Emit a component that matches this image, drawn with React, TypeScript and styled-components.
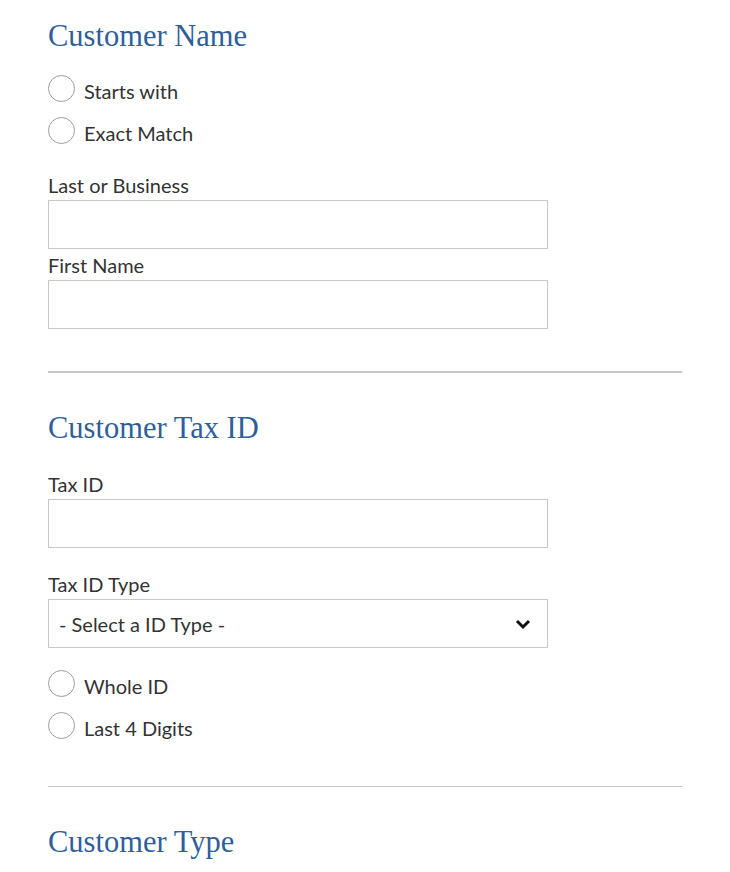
import React from "react";
import styled, { createGlobalStyle } from "styled-components";

const GlobalStyle = createGlobalStyle`
	body {
		margin: 0;
		background: #fff;
		font-family: Lato, "Open Sans", sans-serif;
		color: #333;
	}
`;

const Page = styled.div`
	width: 634px;
	padding: 19px 0 0 48px;
`;

const Heading = styled.h2`
	margin: 0;
	font-family: "Liberation Serif", "DejaVu Serif", serif;
	font-weight: 400;
	font-size: 30.5px;
	line-height: 34px;
	color: #2e5f9c;
`;

const RadioGroup = styled.div<{ $top: number }>`
	display: flex;
	flex-direction: column;
	gap: 14px;
	margin-top: ${(p) => p.$top}px;
`;

const RadioRow = styled.label`
	display: flex;
	align-items: center;
	gap: 9px;
	height: 28px;
	font-size: 20px;
	color: #333;
	cursor: pointer;
`;

const RadioText = styled.span`
	padding-top: 6px;
`;

const Circle = styled.span`
	width: 25px;
	height: 25px;
	border: 1.5px solid #9c9c9c;
	border-radius: 50%;
	flex-shrink: 0;
`;

const Field = styled.div<{ $top: number }>`
	display: flex;
	flex-direction: column;
	gap: 3px;
	margin-top: ${(p) => p.$top}px;
	width: 500px;
`;

const Label = styled.div`
	font-size: 20px;
	line-height: 24px;
	color: #333;
`;

const TextBox = styled.div`
	height: 47px;
	border: 1px solid #c8c8c8;
	background: #fff;
`;

const SelectBox = styled.div`
	height: 47px;
	border: 1px solid #c8c8c8;
	display: flex;
	align-items: center;
	justify-content: space-between;
	padding: 0 16px 0 10px;
	font-size: 20px;
	color: #333;
`;

const Divider = styled.hr<{ $top: number; $thick: number }>`
	margin: ${(p) => p.$top}px 0 0;
	border: none;
	border-top: ${(p) => p.$thick}px solid #c8c8c8;
	height: 0;
`;

const Section = styled.div<{ $top: number }>`
	margin-top: ${(p) => p.$top}px;
`;

const Radio = ({ text }: { text: string }) => (
	<RadioRow>
		<Circle />
		<RadioText>{text}</RadioText>
	</RadioRow>
);

const Chevron = () => (
	<svg width="16" height="12" viewBox="0 0 16 12">
		<polyline
			points="2,3 8,9 14,3"
			fill="none"
			stroke="#111"
			strokeWidth="3"
		/>
	</svg>
);

const App = () => (
	<>
		<GlobalStyle />
		<Page>
			<Heading>Customer Name</Heading>
			<RadioGroup $top={21}>
				<Radio text="Starts with" />
				<Radio text="Exact Match" />
			</RadioGroup>
			<Field $top={29}>
				<Label>Last or Business</Label>
				<TextBox />
			</Field>
			<Field $top={4}>
				<Label>First Name</Label>
				<TextBox />
			</Field>
			<Divider $top={42} $thick={2} />
			<Section $top={38}>
				<Heading>Customer Tax ID</Heading>
				<Field $top={27}>
					<Label>Tax ID</Label>
					<TextBox />
				</Field>
				<Field $top={24}>
					<Label>Tax ID Type</Label>
					<SelectBox>
						- Select a ID Type -
						<Chevron />
					</SelectBox>
				</Field>
				<RadioGroup $top={21}>
					<Radio text="Whole ID" />
					<Radio text="Last 4 Digits" />
				</RadioGroup>
			</Section>
			<Divider $top={47} $thick={1} />
			<Section $top={38}>
				<Heading>Customer Type</Heading>
			</Section>
		</Page>
	</>
);

export default App;
